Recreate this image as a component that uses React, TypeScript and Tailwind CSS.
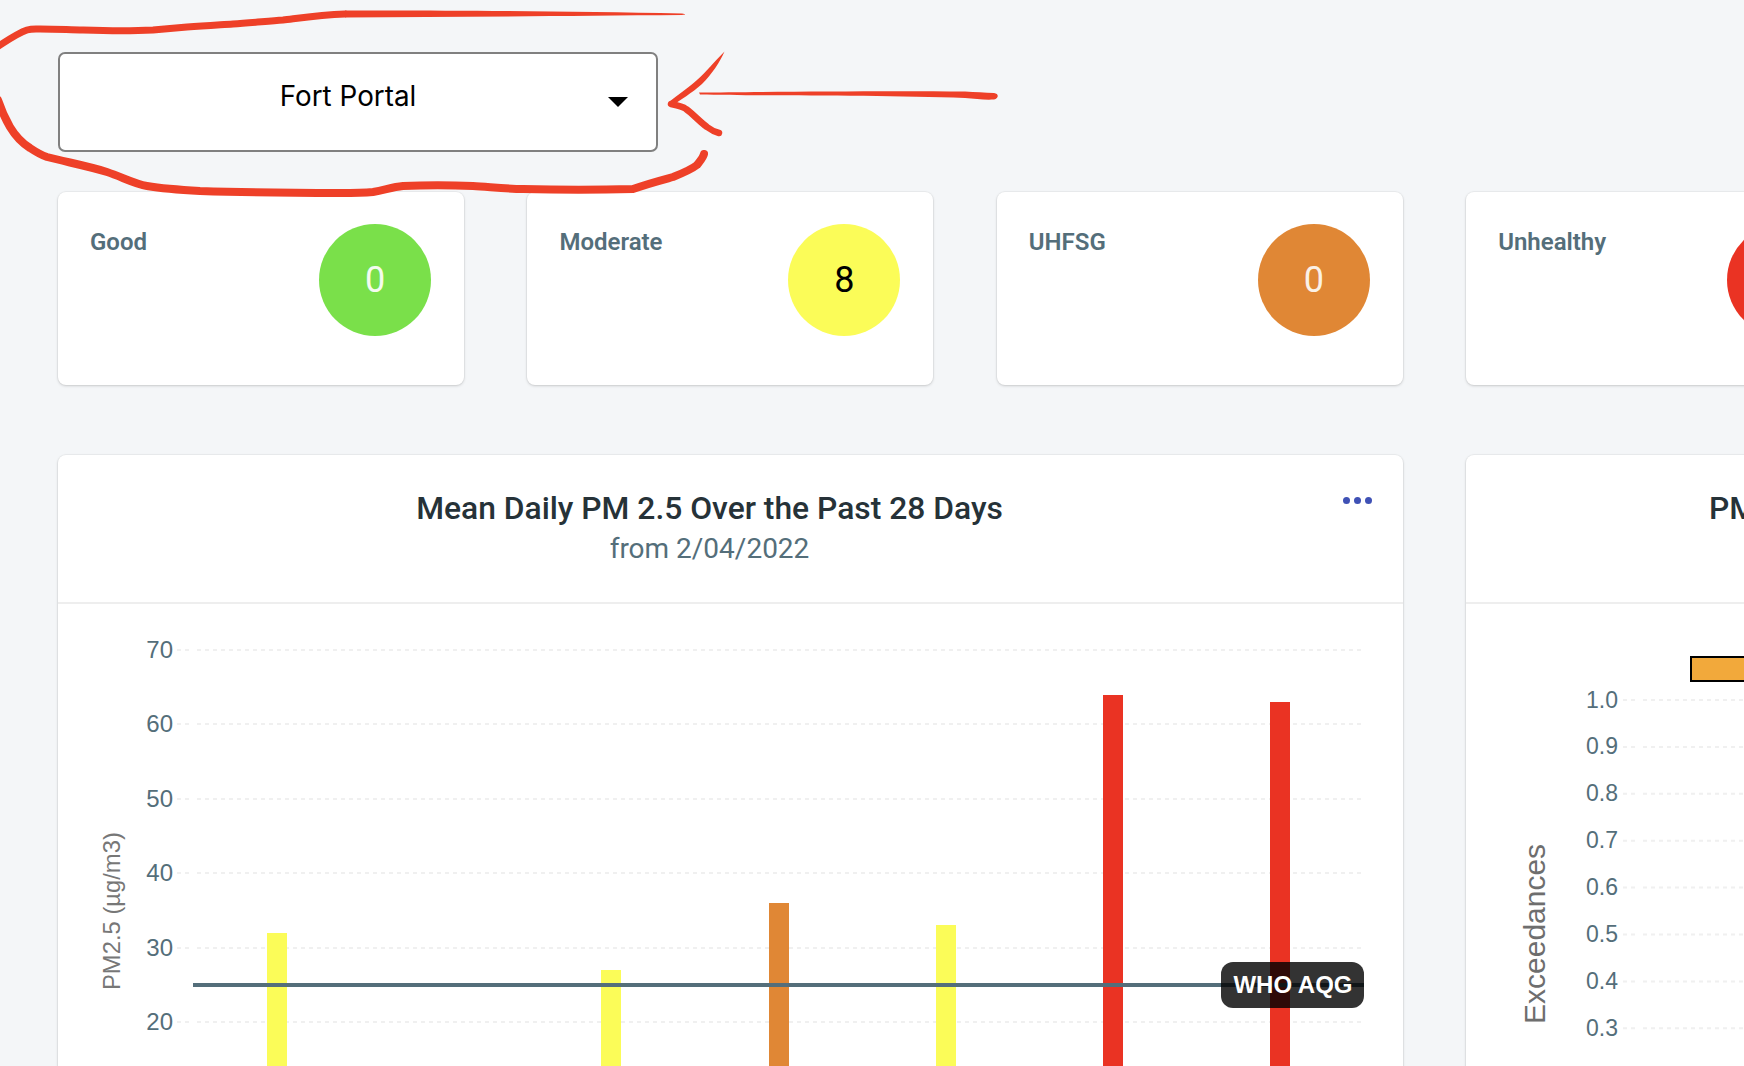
const roboto = "font-['Roboto','Liberation_Sans',sans-serif]";

// summary cards along the top
const stats = [
    { label: 'Good', value: '0', circle: 'bg-[#7ae04a]', text: 'text-[#f4fbef]' },
    { label: 'Moderate', value: '8', circle: 'bg-[#fbfc58]', text: 'text-black' },
    { label: 'UHFSG', value: '0', circle: 'bg-[#e08735]', text: 'text-[#fbf1e6]' },
    { label: 'Unhealthy', value: '0', circle: 'bg-[#ea3323]', text: 'text-white' },
];

const bars = [
    { x: 267, top: 933, color: '#fbfc58' },
    { x: 601, top: 970, color: '#fbfc58' },
    { x: 769, top: 903, color: '#e08735' },
    { x: 936, top: 925, color: '#fbfc58' },
    { x: 1103, top: 695, color: '#ea3323' },
    { x: 1270, top: 702, color: '#ea3323' },
];

const leftTicks = [
    { label: '70', y: 650 },
    { label: '60', y: 724 },
    { label: '50', y: 799 },
    { label: '40', y: 873 },
    { label: '30', y: 948 },
    { label: '20', y: 1022 },
];

const rightTicks = ['1.0', '0.9', '0.8', '0.7', '0.6', '0.5', '0.4', '0.3', '0.2'];

const chartFont = "'Liberation Sans', Arial, sans-serif";

const cardShadow = 'shadow-[0_0_0_1px_rgba(0,0,0,0.03),0_1px_3px_rgba(0,0,0,0.16)]';

const StatCard = ({ label, value, circle, text }: (typeof stats)[number]) => (
    <div className={`flex h-[193px] w-[406px] shrink-0 justify-between rounded-lg bg-white pt-[32px] pr-[33px] pl-[32px] ${cardShadow}`}>
        <div className={`${roboto} text-[24px] leading-[36px] font-semibold text-[#546e7a]`}>{label}</div>
        <div className={`${roboto} flex h-[112px] w-[112px] shrink-0 items-center justify-center rounded-full text-[36px] ${circle} ${text}`}>
            {value}
        </div>
    </div>
);

const ChartCard = ({ children, header, width }: { children: React.ReactNode; header: React.ReactNode; width: string }) => (
    <div className={`relative shrink-0 rounded-lg bg-white ${width} ${cardShadow}`}>
        <div className="relative h-[149px] border-b-2 border-[#eeeeee]">{header}</div>
        {children}
    </div>
);

// apex style grid line: two dashes, a hole, then the regular run
const GridLine = ({ x1, x2, y }: { x1: number; x2: number; y: number }) => (
    <>
        <line x1={x1} x2={x1 + 12} y1={y} y2={y} stroke="#f0f0f0" strokeWidth="2" strokeDasharray="4 4" />
        <line x1={x1 + 20} x2={x2} y1={y} y2={y} stroke="#f0f0f0" strokeWidth="2" strokeDasharray="4 4" />
    </>
);

export default function App() {
    return (
        <div className="relative h-[1066px] w-[1744px] overflow-hidden bg-[#f4f6f8]">
            <div className="pt-[52px] pl-[58px]">
                <button className="relative flex h-[100px] w-[600px] items-start justify-center rounded-[7px] border-2 border-[#808080] bg-white pt-[22px] pr-[20px] font-['Inter','Roboto',sans-serif] text-[27.8px] text-black">
                    Fort Portal
                    <svg className="absolute top-[43px] right-[28px]" width="20" height="10" viewBox="0 0 20 10">
                        <path d="M0 0H20L10 10Z" fill="#000" />
                    </svg>
                </button>
            </div>

            <div className="mt-[40px] flex gap-[63.4px] pl-[58px]">
                {stats.map(s => (
                    <StatCard key={s.label} {...s} />
                ))}
            </div>

            <div className="mt-[70px] flex gap-[63px] pl-[58px]">
                <ChartCard
                    width="w-[1345px]"
                    header={
                        <>
                            <div className="flex flex-col items-center pt-[31px] pr-[42px]">
                                <div className={`${roboto} text-[31.8px] leading-[44px] font-medium text-[#263238]`}>Mean Daily PM 2.5 Over the Past 28 Days</div>
                                <div className={`${roboto} text-[28px] leading-[37px] text-[#546e7a]`}>from 2/04/2022</div>
                            </div>
                            <div className="absolute top-[42px] right-[31px] flex gap-[4px]">
                                <span className="h-[7px] w-[7px] rounded-full bg-[#3f51b5]" />
                                <span className="h-[7px] w-[7px] rounded-full bg-[#3f51b5]" />
                                <span className="h-[7px] w-[7px] rounded-full bg-[#3f51b5]" />
                            </div>
                        </>
                    }
                >
                    <svg className="block" width="1345" height="600" viewBox="58 604 1345 600" fontFamily={chartFont}>
                        {leftTicks.map(t => (
                            <g key={t.label}>
                                <GridLine x1={177} x2={1361} y={t.y} />
                                <text x="173" y={t.y + 8} textAnchor="end" fontSize="24" fill="#546e7a">{t.label}</text>
                            </g>
                        ))}
                        {bars.map(b => (
                            <rect key={b.x} x={b.x} y={b.top} width="20" height={1171 - b.top} fill={b.color} />
                        ))}
                        <rect x="193" y="983" width="1171" height="4" fill="#546e7a" />
                        <rect x="1221" y="962" width="143" height="46" rx="12" fill="#000" fillOpacity="0.8" />
                        <text x="1293" y="993" textAnchor="middle" fontSize="24" fontWeight="700" fill="#fff">WHO AQG</text>
                        <text transform="translate(120 990) rotate(-90)" fontSize="23.8" fill="#777777">PM2.5 (µg/m3)</text>
                    </svg>
                </ChartCard>

                <ChartCard
                    width="w-[1346px]"
                    header={
                        <div className={`${roboto} pt-[31px] pl-[243px] text-[31.8px] leading-[44px] font-medium text-[#263238]`}>PM 2.5 Exceedances</div>
                    }
                >
                    <svg className="block" width="1346" height="600" viewBox="1466 604 1346 600" fontFamily={chartFont}>
                        {rightTicks.map((t, i) => {
                            const y = 700 + i * 46.9;
                            return (
                                <g key={t}>
                                    <GridLine x1={1623} x2={2700} y={y} />
                                    <text x="1618" y={y + 7.5} textAnchor="end" fontSize="23" fill="#546e7a">{t}</text>
                                </g>
                            );
                        })}
                        <rect x="1691" y="657" width="120" height="24" fill="#f2a93b" stroke="#000" strokeWidth="2" />
                        <text transform="translate(1545 1024) rotate(-90)" fontSize="30" fill="#6e6e6e">Exceedances</text>
                    </svg>
                </ChartCard>
            </div>

            {/* red marker scribble on top of the screenshot */}
            <svg className="absolute top-0 left-0" width="1020" height="200" viewBox="0 0 1020 200" fill="none" stroke="#ee4028" strokeLinecap="round" strokeLinejoin="round">
                <path d="M-3 47C8 40 18 33 27 30 32 28.500 36 29 40 29 60 29 70 30 83 30 110 31 135 31 153 30 165 29 175 28 187 27 205 26 218 25 233 24 250 23 268 21 283 20 300 18 320 15 345 14" strokeWidth="7" />
                <path d="M345 10.500C420 10 560 11 682 13.500 686 14 686 14.500 682 15 560 16 450 17 345 17.500Z" fill="#ee4028" stroke="none" />
                <path d="M-2 100C2 112 6 120 10 127 16 137 22 143 30 148 36 152 41 155 47 157 66 162 88 166 107 172 122 177 135 184 147 186 165 189 182 190 200 191 245 192.500 295 193 340 193 352 193 362 193 373 192 385 190 392 187 403 186 425 185 450 185 473 186 490 187 507 189 523 189 560 190 598 190 633 189 650 183 662 180 673 177 683 173 692 169 697 165 700 161 703 158 704 154" strokeWidth="8" />
                <path d="M724.500 51.500C714 62 706 72 697 80 689 87 678 95 669 102 667 104 669 106 672 106 680 100 692 93 702 84 712 74 720 62 724.500 51.500Z" fill="#ee4028" stroke="none" />
                <path d="M671 104C676 105 682 106 686 109 693 114 700 122 707 127 711 130 715 132 719 133" strokeWidth="6.500" />
                <path d="M699 92.500C760 92 880 90.500 965 91.500 975 92 985 92.500 994 93 999 93.500 999 98.500 994 99.500 985 100 975 99 965 98 880 95 760 96 700 94.500Z" fill="#ee4028" stroke="none" />
            </svg>
        </div>
    );
}
